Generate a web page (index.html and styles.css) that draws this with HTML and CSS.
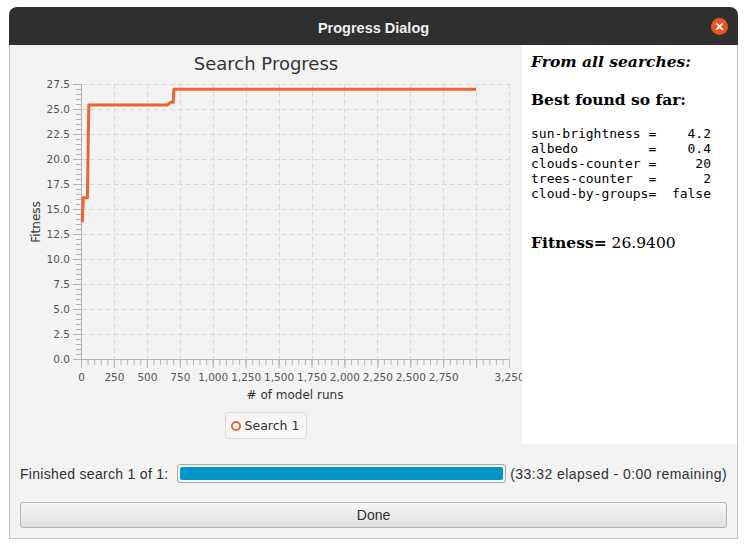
FILE: index.html
```html
<!DOCTYPE html>
<html>
<head>
<meta charset="utf-8">
<title>Progress Dialog</title>
<link rel="stylesheet" href="styles.css">
</head>
<body>
<div class="window">
  <div class="titlebar">
    <span class="title">Progress Dialog</span>
    <svg class="close" width="17" height="17" viewBox="0 0 17 17">
      <circle cx="8.5" cy="8.5" r="8.5" fill="#e95420"/>
      <path d="M5.6 5.6L11.4 11.4M11.4 5.6L5.6 11.4" stroke="#fff" stroke-width="1.6" stroke-linecap="round"/>
    </svg>
  </div>
  <div class="content">
    <div class="main">
      <div class="chart-panel">
        <div class="chart-title">Search Progress</div>
        <svg class="chart" width="512" height="330" viewBox="0 0 512 330">
          <g class="grid">
            <line x1="72" y1="10.5" x2="500" y2="10.5"/>
            <line x1="72" y1="35.5" x2="500" y2="35.5"/>
            <line x1="72" y1="60.5" x2="500" y2="60.5"/>
            <line x1="72" y1="85.5" x2="500" y2="85.5"/>
            <line x1="72" y1="110.5" x2="500" y2="110.5"/>
            <line x1="72" y1="135.5" x2="500" y2="135.5"/>
            <line x1="72" y1="160.5" x2="500" y2="160.5"/>
            <line x1="72" y1="185.5" x2="500" y2="185.5"/>
            <line x1="72" y1="210.5" x2="500" y2="210.5"/>
            <line x1="72" y1="235.5" x2="500" y2="235.5"/>
            <line x1="72" y1="260.5" x2="500" y2="260.5"/>
            <line x1="104.5" y1="10" x2="104.5" y2="285"/>
            <line x1="137.5" y1="10" x2="137.5" y2="285"/>
            <line x1="170.5" y1="10" x2="170.5" y2="285"/>
            <line x1="203.5" y1="10" x2="203.5" y2="285"/>
            <line x1="236.5" y1="10" x2="236.5" y2="285"/>
            <line x1="269.5" y1="10" x2="269.5" y2="285"/>
            <line x1="302.5" y1="10" x2="302.5" y2="285"/>
            <line x1="334.5" y1="10" x2="334.5" y2="285"/>
            <line x1="367.5" y1="10" x2="367.5" y2="285"/>
            <line x1="400.5" y1="10" x2="400.5" y2="285"/>
            <line x1="433.5" y1="10" x2="433.5" y2="285"/>
            <line x1="466.5" y1="10" x2="466.5" y2="285"/>
            <line x1="499.5" y1="10" x2="499.5" y2="285"/>
          </g>
          <g class="axis">
            <line x1="71.5" y1="10" x2="71.5" y2="286"/>
            <line x1="71" y1="285.5" x2="500" y2="285.5"/>
            <line x1="68.5" y1="10" x2="68.5" y2="286" stroke-width="5" stroke-dasharray="1 4"/>
            <line x1="67" y1="10" x2="67" y2="286" stroke-width="8" stroke-dasharray="1 24"/>
            <line x1="71" y1="288.5" x2="500" y2="288.5" stroke-width="5" stroke-dasharray="1 5.586"/>
            <line x1="71" y1="290" x2="500" y2="290" stroke-width="8" stroke-dasharray="1 31.93"/>
          </g>
          <g class="ylabels">
            <text x="60" y="14.3">27.5</text>
            <text x="60" y="39.3">25.0</text>
            <text x="60" y="64.3">22.5</text>
            <text x="60" y="89.3">20.0</text>
            <text x="60" y="114.3">17.5</text>
            <text x="60" y="139.3">15.0</text>
            <text x="60" y="164.3">12.5</text>
            <text x="60" y="189.3">10.0</text>
            <text x="60" y="214.3">7.5</text>
            <text x="60" y="239.3">5.0</text>
            <text x="60" y="264.3">2.5</text>
            <text x="60" y="289.3">0.0</text>
          </g>
          <g class="xlabels">
            <text x="71.5" y="306.5">0</text>
            <text x="104.4" y="306.5">250</text>
            <text x="137.4" y="306.5">500</text>
            <text x="170.3" y="306.5">750</text>
            <text x="203.2" y="306.5">1,000</text>
            <text x="236.2" y="306.5">1,250</text>
            <text x="269.1" y="306.5">1,500</text>
            <text x="302" y="306.5">1,750</text>
            <text x="334.9" y="306.5">2,000</text>
            <text x="367.9" y="306.5">2,250</text>
            <text x="400.8" y="306.5">2,500</text>
            <text x="433.7" y="306.5">2,750</text>
            <text x="499.6" y="306.5">3,250</text>
          </g>
          <text class="axis-label" transform="translate(29.5 148) rotate(-90)">Fitness</text>
          <text class="axis-label" x="285" y="325"># of model runs</text>
          <path class="series" d="M72.3 148.3 L73.3 123.8 L77.4 123.8 L78.8 31 L157.7 31 L160.4 28.3 L163.2 28.3 L163.9 15.3 L466 15.3"/>
        </svg>
        <div class="legend"><span class="legend-dot"></span><span>Search 1</span></div>
      </div>
      <div class="info">
        <p class="from">From all searches:</p>
        <p class="best">Best found so far:</p>
<pre class="params">sun-brightness =    4.2
albedo         =    0.4
clouds-counter =     20
trees-counter  =      2
cloud-by-groups=  false</pre>
        <p class="fitness"><b>Fitness=</b> 26.9400</p>
      </div>
    </div>
    <div class="progress-row">
      <span class="status">Finished search 1 of 1:</span>
      <div class="bar"><div class="fill"></div></div>
      <span class="elapsed">(33:32 elapsed - 0:00 remaining)</span>
    </div>
    <button class="done">Done</button>
  </div>
</div>
</body>
</html>
```

FILE: styles.css
```css
body {
  margin: 0;
  background: #ffffff;
}

.window {
  width: 729px;
  margin: 7px 0 0 9px;
}

.titlebar {
  height: 38px;
  background: #2f2f2f;
  border-radius: 8px 8px 0 0;
  display: grid;
  grid-template-columns: 1fr auto 1fr;
  align-items: center;
}

.title {
  grid-column: 2;
  color: #f0f0f0;
  font: bold 14.5px "Liberation Sans", sans-serif;
  padding-top: 3px;
}

.close {
  grid-column: 3;
  justify-self: end;
  margin-right: 10px;
  display: block;
}

.content {
  background: #f3f3f3;
  border: 1px solid #c4c4c4;
  border-top: 0;
  padding-bottom: 10px;
}

.main {
  display: flex;
  height: 399px;
}

.chart-panel {
  width: 512px;
  display: flex;
  flex-direction: column;
  align-items: center;
}

.chart-title {
  margin-top: 8px;
  font: 18px/21px "DejaVu Sans", sans-serif;
  color: #333333;
}

.chart {
  display: block;
  font-family: "DejaVu Sans", sans-serif;
}

.grid line {
  stroke: #d9d9d9;
  stroke-width: 1;
  stroke-dasharray: 5 3;
}

.axis line {
  stroke: #b4b4b4;
}

.ylabels text {
  font-size: 10.5px;
  fill: #555555;
  text-anchor: end;
}

.xlabels text {
  font-size: 10.5px;
  fill: #555555;
  text-anchor: middle;
}

.axis-label {
  font-size: 12px;
  fill: #333333;
  text-anchor: middle;
}

.series {
  fill: none;
  stroke: #f3622d;
  stroke-width: 3;
  stroke-linejoin: round;
}

.legend {
  margin-top: 8px;
  height: 27px;
  box-sizing: border-box;
  display: flex;
  align-items: center;
  gap: 4px;
  padding: 0 7px 0 5px;
  border: 1px solid #dadada;
  border-radius: 4px;
  background: #f6f6f6;
  font: 12.5px "DejaVu Sans", sans-serif;
  color: #333333;
}

.legend-dot {
  width: 10px;
  height: 10px;
  box-sizing: border-box;
  border: 2px solid #f3622d;
  border-radius: 50%;
  background: #ffffff;
}

.info {
  flex: 1;
  background: #ffffff;
  padding: 8px 0 0 9px;
  color: #000000;
  font-family: "DejaVu Serif", serif;
}

.info p {
  margin: 0;
  font-size: 15.5px;
  line-height: 18px;
}

.from {
  font-weight: bold;
  font-style: italic;
}

.best {
  font-weight: bold;
  margin-top: 20px !important;
}

.params {
  margin: 17px 0 0;
  font: 13px/15px "DejaVu Sans Mono", monospace;
}

.fitness {
  margin-top: 33px !important;
}

.progress-row {
  display: flex;
  align-items: center;
  height: 19px;
  margin-top: 20px;
  padding: 0 10px;
  font: 14px "Liberation Sans", sans-serif;
  color: #303030;
  white-space: nowrap;
}

.status {
  margin-right: 8px;
  letter-spacing: 0.3px;
}

.bar {
  flex: 1;
  height: 19px;
  box-sizing: border-box;
  border: 1px solid #a6a6a6;
  border-radius: 3px;
  background: #f7f7f7;
  padding: 2px;
}

.fill {
  height: 100%;
  background: #0096c9;
  border-radius: 2px;
}

.elapsed {
  margin-left: 4px;
  letter-spacing: 0.45px;
}

.done {
  display: block;
  width: calc(100% - 20px);
  height: 26px;
  margin: 19px 10px 0;
  border: 1px solid #b4b4b4;
  border-radius: 3px;
  background: linear-gradient(#f6f6f6, #e0e0e0);
  font: 14px "Liberation Sans", sans-serif;
  color: #303030;
  padding: 0;
}
```
